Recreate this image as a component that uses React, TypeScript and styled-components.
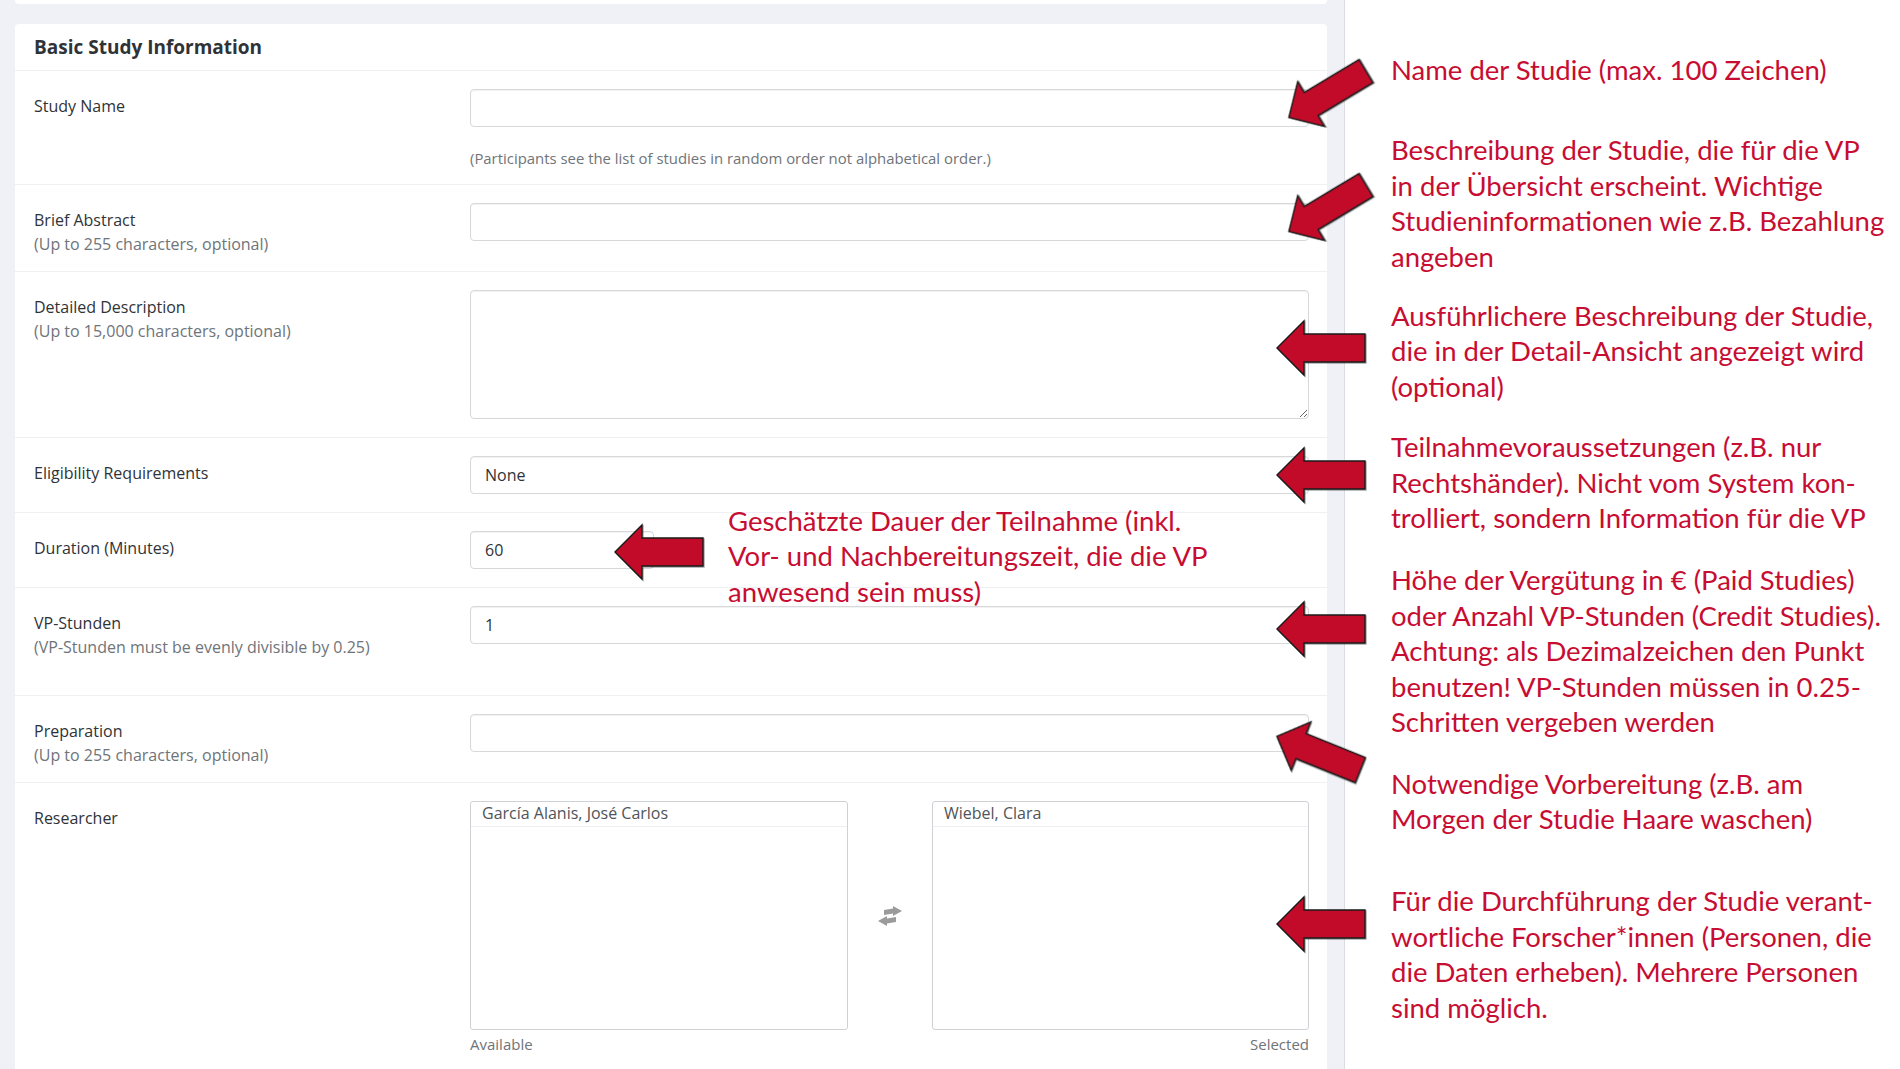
import React from "react";
import styled, { createGlobalStyle } from "styled-components";

const GlobalStyle = createGlobalStyle`
  html, body { margin: 0; padding: 0; background: #ffffff; }
  body { font-family: "Open Sans", "Noto Sans", sans-serif; }
  * { box-sizing: border-box; }
`;

const Page = styled.div`
  position: relative;
  display: flex;
  width: 1900px;
  height: 1069px;
  overflow: hidden;
  background: #ffffff;
`;

const FormPane = styled.div`
  width: 1345px;
  flex: none;
  background: #eff1f6;
  border-right: 1px solid #dcdde3;
  padding: 0 17px 0 15px;
`;

const PrevCardEdge = styled.div`
  height: 4px;
  background: #ffffff;
  border-radius: 0 0 4px 4px;
`;

const Card = styled.div`
  margin-top: 20px;
  background: #ffffff;
  border-radius: 4px 4px 0 0;
  height: 1100px;
`;

const CardHeader = styled.div`
  height: 46px;
  display: flex;
  align-items: center;
  padding-left: 19px;
  font-size: 19px;
  font-weight: 700;
  color: #2f3337;
`;

const Row = styled.div<{ $pb?: number }>`
  display: grid;
  grid-template-columns: 436px 1fr;
  border-top: 1px solid #eef0f4;
  padding: 18px 18px ${(p) => p.$pb ?? 18}px 19px;
`;

const LabelBlock = styled.div`
  margin-top: 5px;
  line-height: 24px;
  font-size: 16px;
  color: #2f3337;
`;

const SubLabel = styled.div`
  color: #6f7479;
`;

const Field = styled.div`
  display: flex;
  flex-direction: column;
`;

const TextInput = styled.input<{ $w?: number }>`
  width: ${(p) => (p.$w ? `${p.$w}px` : "100%")};
  height: 38px;
  border: 1px solid #d6d8db;
  border-radius: 4px;
  padding: 0 14px;
  font-family: "Open Sans", sans-serif;
  font-size: 16px;
  color: #2f3337;
  background: #ffffff;
  box-shadow: inset 0 1px 1px rgba(0, 0, 0, 0.06);
  outline: none;
`;

const TextArea = styled.textarea`
  width: 100%;
  height: 129px;
  border: 1px solid #d6d8db;
  border-radius: 4px;
  padding: 8px 14px;
  font-family: "Open Sans", sans-serif;
  font-size: 16px;
  color: #2f3337;
  box-shadow: inset 0 1px 1px rgba(0, 0, 0, 0.06);
  outline: none;
  display: block;
`;

const Help = styled.div`
  margin-top: 21px;
  line-height: 20px;
  font-size: 14.9px;
  color: #6f7479;
`;

const DualList = styled.div`
  display: grid;
  grid-template-columns: 378px 84px 1fr;
`;

const ListCol = styled.div<{ $align?: "left" | "right" }>`
  display: flex;
  flex-direction: column;
  align-items: ${(p) => (p.$align === "right" ? "flex-end" : "flex-start")};
`;

const ListBox = styled.div`
  width: 100%;
  height: 229px;
  border: 1px solid #cfd1d4;
  border-radius: 3px;
  background: #ffffff;
`;

const ListItem = styled.div`
  height: 25px;
  line-height: 23px;
  padding: 0 11px;
  border-bottom: 1px solid #eceef0;
  font-size: 16px;
  color: #505458;
`;

const ListCaption = styled.div`
  margin-top: 4px;
  line-height: 20px;
  font-size: 15px;
  color: #6f7479;
`;

const SwapCell = styled.div`
  height: 229px;
  display: flex;
  align-items: center;
  justify-content: center;
`;

const NotesPane = styled.div`
  flex: 1;
  padding-left: 46px;
  background: #ffffff;
`;

const Note = styled.div<{ $mt: number }>`
  margin-top: ${(p) => p.$mt}px;
  font-family: Lato, "Open Sans", sans-serif;
  font-size: 27.5px;
  line-height: 35.4px;
  color: #c70d32;
`;

const NoteLine = styled.div`
  white-space: nowrap;
`;

const FloatingNote = styled(Note)`
  position: absolute;
  left: 728px;
  top: 503px;
  margin-top: 0;
`;

const ArrowSvg = styled.svg<{ $x: number; $y: number; $angle: number }>`
  position: absolute;
  left: ${(p) => p.$x}px;
  top: ${(p) => p.$y}px;
  transform-origin: 0 50%;
  transform: rotate(${(p) => p.$angle}deg);
  overflow: visible;
  filter: drop-shadow(1px 1px 0.5px rgba(0, 0, 0, 0.35));
`;

type ArrowProps = { x: number; y: number; angle?: number; len?: number; h?: number };

function Arrow({ x, y, angle = 0, len = 90, h = 56 }: ArrowProps) {
  const hl = h * 0.5;
  const sh = h * 0.25;
  const mid = h / 2;
  const pts = [
    [1, mid],
    [hl, 1],
    [hl, mid - sh],
    [len - 1, mid - sh],
    [len - 1, mid + sh],
    [hl, mid + sh],
    [hl, h - 1],
  ]
    .map((p) => p.join(","))
    .join(" ");
  return (
    <ArrowSvg $x={x} $y={y - h / 2} $angle={angle} width={len} height={h} viewBox={`0 0 ${len} ${h}`}>
      <polygon points={pts} fill="#c20b29" stroke="#1a1a1a" strokeWidth={1.4} strokeLinejoin="miter" />
    </ArrowSvg>
  );
}

function SwapIcon() {
  return (
    <svg width="26" height="20" viewBox="0 0 26 20" fill="#9b9b9b">
      <polygon points="7,4 16,2.5 16,0 25,5 16,10 16,7.5 7,9" />
      <polygon points="19,11 10,12.5 10,10 1,15 10,20 10,17.5 19,16" />
    </svg>
  );
}

function Lines({ lines }: { lines: string[] }) {
  return (
    <>
      {lines.map((l, i) => (
        <NoteLine key={i}>{l}</NoteLine>
      ))}
    </>
  );
}

const notes: { mt: number; lines: string[] }[] = [
  { mt: 52, lines: ["Name der Studie (max. 100 Zeichen)"] },
  {
    mt: 45,
    lines: [
      "Beschreibung der Studie, die für die VP",
      "in der Übersicht erscheint. Wichtige",
      "Studieninformationen wie z.B. Bezahlung",
      "angeben",
    ],
  },
  {
    mt: 24,
    lines: [
      "Ausführlichere Beschreibung der Studie,",
      "die in der Detail-Ansicht angezeigt wird",
      "(optional)",
    ],
  },
  {
    mt: 25,
    lines: [
      "Teilnahmevoraussetzungen (z.B. nur",
      "Rechtshänder). Nicht vom System kon-",
      "trolliert, sondern Information für die VP",
    ],
  },
  {
    mt: 27,
    lines: [
      "Höhe der Vergütung in € (Paid Studies)",
      "oder Anzahl VP-Stunden (Credit Studies).",
      "Achtung: als Dezimalzeichen den Punkt",
      "benutzen! VP-Stunden müssen in 0.25-",
      "Schritten vergeben werden",
    ],
  },
  {
    mt: 26,
    lines: ["Notwendige Vorbereitung (z.B. am", "Morgen der Studie Haare waschen)"],
  },
  {
    mt: 47,
    lines: [
      "Für die Durchführung der Studie verant-",
      "wortliche Forscher*innen (Personen, die",
      "die Daten erheben). Mehrere Personen",
      "sind möglich.",
    ],
  },
];

export default function App() {
  return (
    <Page>
      <GlobalStyle />
      <FormPane>
        <PrevCardEdge />
        <Card>
          <CardHeader>Basic Study Information</CardHeader>

          <Row $pb={16}>
            <LabelBlock>Study Name</LabelBlock>
            <Field>
              <TextInput readOnly defaultValue="" />
              <Help>(Participants see the list of studies in random order not alphabetical order.)</Help>
            </Field>
          </Row>

          <Row $pb={15}>
            <LabelBlock>
              Brief Abstract
              <SubLabel>(Up to 255 characters, optional)</SubLabel>
            </LabelBlock>
            <Field>
              <TextInput readOnly defaultValue="" />
            </Field>
          </Row>

          <Row>
            <LabelBlock>
              Detailed Description
              <SubLabel>(Up to 15,000 characters, optional)</SubLabel>
            </LabelBlock>
            <Field>
              <TextArea readOnly defaultValue="" />
            </Field>
          </Row>

          <Row>
            <LabelBlock>Eligibility Requirements</LabelBlock>
            <Field>
              <TextInput readOnly defaultValue="None" />
            </Field>
          </Row>

          <Row>
            <LabelBlock>Duration (Minutes)</LabelBlock>
            <Field>
              <TextInput readOnly defaultValue="60" $w={184} />
            </Field>
          </Row>

          <Row $pb={36}>
            <LabelBlock>
              VP-Stunden
              <SubLabel>(VP-Stunden must be evenly divisible by 0.25)</SubLabel>
            </LabelBlock>
            <Field>
              <TextInput readOnly defaultValue="1" />
            </Field>
          </Row>

          <Row $pb={15}>
            <LabelBlock>
              Preparation
              <SubLabel>(Up to 255 characters, optional)</SubLabel>
            </LabelBlock>
            <Field>
              <TextInput readOnly defaultValue="" />
            </Field>
          </Row>

          <Row>
            <LabelBlock>Researcher</LabelBlock>
            <DualList>
              <ListCol>
                <ListBox>
                  <ListItem>García Alanis, José Carlos</ListItem>
                </ListBox>
                <ListCaption>Available</ListCaption>
              </ListCol>
              <SwapCell>
                <SwapIcon />
              </SwapCell>
              <ListCol $align="right">
                <ListBox>
                  <ListItem>Wiebel, Clara</ListItem>
                </ListBox>
                <ListCaption>Selected</ListCaption>
              </ListCol>
            </DualList>
          </Row>
        </Card>
      </FormPane>

      <NotesPane>
        {notes.map((n, i) => (
          <Note key={i} $mt={n.mt}>
            <Lines lines={n.lines} />
          </Note>
        ))}
      </NotesPane>

      <FloatingNote $mt={0}>
        <Lines
          lines={[
            "Geschätzte Dauer der Teilnahme (inkl.",
            "Vor- und Nachbereitungszeit, die die VP",
            "anwesend sein muss)",
          ]}
        />
      </FloatingNote>

      <Arrow x={1288} y={118} angle={-31} len={92} h={54} />
      <Arrow x={1288} y={232} angle={-31} len={92} h={54} />
      <Arrow x={1276} y={348} />
      <Arrow x={1276} y={475} />
      <Arrow x={614} y={552} />
      <Arrow x={1276} y={629} />
      <Arrow x={1276} y={736} angle={22} len={92} h={54} />
      <Arrow x={1276} y={924} />
    </Page>
  );
}
